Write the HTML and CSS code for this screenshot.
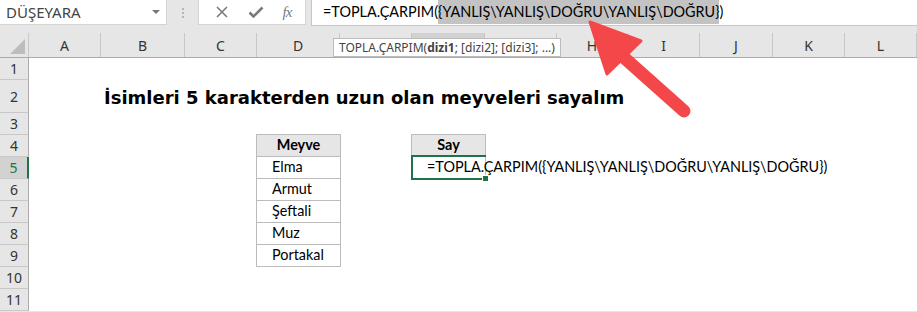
FILE: index.html
```html
<!DOCTYPE html>
<html lang="tr">
<head>
    <meta charset="UTF-8">
    <title>TOPLA.ÇARPIM</title>
    <link rel="stylesheet" href="styles.css">
</head>
<body>
  <div class="app">
    <div class="topbar">
      <div class="namebox">
        <span>DÜŞEYARA</span>
        <span class="caret"></span>
      </div>
      <div class="grip"><i></i><i></i><i></i></div>
      <div class="fxbox">
        <svg width="14" height="14" viewBox="0 0 14 14"><path d="M2 2 L12 12 M12 2 L2 12" stroke="#7a7a7a" stroke-width="1.6" fill="none"/></svg>
        <svg width="16" height="14" viewBox="0 0 16 14"><path d="M1.5 7.5 L5.5 11.5 L14.5 2.5" stroke="#7a7a7a" stroke-width="2.6" fill="none"/></svg>
        <span class="fx">fx</span>
      </div>
      <div class="formula">=TOPLA.ÇARPIM(<span class="hl">{YANLIŞ\YANLIŞ\DOĞRU\YANLIŞ\DOĞRU}</span>)</div>
    </div>

    <div class="colheads">
      <div class="corner"></div>
      <div class="ch w72">A</div>
      <div class="ch w84">B</div>
      <div class="ch w72">C</div>
      <div class="ch w83">D</div>
      <!-- E, F, G letters sit under the tooltip -->
      <div class="ch w72"></div>
      <div class="ch w73 active"></div>
      <div class="ch w72"></div>
      <div class="ch w71">H</div>
      <div class="ch w72">I</div>
      <div class="ch w73">J</div>
      <div class="ch w72">K</div>
      <div class="ch w72">L</div>
    </div>

    <div class="main">
      <div class="rowheads">
        <div class="rh">1</div>
        <div class="rh tall">2</div>
        <div class="rh">3</div>
        <div class="rh">4</div>
        <div class="rh active">5</div>
        <div class="rh">6</div>
        <div class="rh">7</div>
        <div class="rh">8</div>
        <div class="rh">9</div>
        <div class="rh">10</div>
        <div class="rh">11</div>
      </div>

      <div class="cells">
        <div class="title">İsimleri 5 karakterden uzun olan meyveleri sayalım</div>

        <div class="list fruits">
          <div class="item head">Meyve</div>
          <div class="item">Elma</div>
          <div class="item">Armut</div>
          <div class="item">Şeftali</div>
          <div class="item">Muz</div>
          <div class="item">Portakal</div>
        </div>

        <div class="list count">
          <div class="item head">Say</div>
          <div class="item"></div>
        </div>

        <div class="selected">=TOPLA.ÇARPIM({YANLIŞ\YANLIŞ\DOĞRU\YANLIŞ\DOĞRU})</div>
      </div>
    </div>

    <div class="tooltip">TOPLA.ÇARPIM(<b>dizi1</b>; [dizi2]; [dizi3]; ...)</div>

    <svg class="arrow" width="917" height="312" viewBox="0 0 917 312">
      <line x1="620" y1="54" x2="684" y2="111" stroke="#f4474a" stroke-width="13" stroke-linecap="round"/>
      <polygon points="590,22 641,41 607,74" fill="#f4474a" stroke="#f4474a" stroke-width="3" stroke-linejoin="round"/>
    </svg>
  </div>
</body>
</html>
```

FILE: styles.css
```css
body {
    margin: 0;
    background: #fff;
  }

  .app {
    position: relative;
    width: 917px;
    height: 312px;
    overflow: hidden;
    background: #e6e6e6;
  }

  /* formula bar */
  .topbar {
    display: flex;
    height: 26px;
    margin-bottom: 7px;
  }

  .namebox {
    width: 167px;
    height: 25px;
    box-sizing: border-box;
    background: #fff;
    border-right: 1px solid #d4d4d4;
    border-bottom: 1px solid #d4d4d4;
    display: flex;
    align-items: center;
    justify-content: space-between;
    padding: 0 6px 0 6px;
    font-family: "Noto Sans", sans-serif;
    font-size: 15px;
    color: #444;
  }

  .caret {
    width: 0;
    height: 0;
    border-left: 4px solid transparent;
    border-right: 4px solid transparent;
    border-top: 4px solid #777;
  }

  .grip {
    width: 31px;
    display: flex;
    flex-direction: column;
    align-items: center;
    justify-content: center;
    gap: 2px;
  }

  .grip i {
    width: 2px;
    height: 2px;
    background: #b4b4b4;
  }

  .fxbox {
    width: 108px;
    height: 25px;
    box-sizing: border-box;
    background: #fff;
    border: 1px solid #d4d4d4;
    border-top: none;
    display: flex;
    align-items: center;
    justify-content: space-around;
    padding: 0 4px 0 6px;
  }

  .fx {
    font-family: "Liberation Serif", serif;
    font-style: italic;
    font-size: 15px;
    color: #7a7a7a;
    letter-spacing: -1px;
  }

  .formula {
    margin-left: 5px;
    flex: 1;
    height: 26px;
    box-sizing: border-box;
    background: #fff;
    border: 1px solid #c6c6c6;
    border-top: none;
    border-right: none;
    padding: 3px 0 0 11px;
    font-family: Lato, sans-serif;
    font-size: 14.4px;
    color: #000;
    white-space: nowrap;
  }

  .hl {
    background: #c3c3c3;
    padding: 3px 0 4px;
  }

  /* column headers */
  .colheads {
    display: flex;
    height: 25px;
    box-sizing: border-box;
    border-bottom: 1px solid #ababab;
  }

  .corner {
    width: 29px;
    box-sizing: border-box;
    border-right: 1px solid #c8c8c8;
    position: relative;
  }

  .corner::after {
    content: "";
    position: absolute;
    right: 3px;
    bottom: 3px;
    border-left: 15px solid transparent;
    border-bottom: 15px solid #bdbdbd;
  }

  .ch {
    box-sizing: border-box;
    border-right: 1px solid #c8c8c8;
    display: flex;
    align-items: center;
    justify-content: center;
    font-family: "Noto Sans", sans-serif;
    font-size: 14px;
    color: #333;
  }

  .ch.active {
    background: #d2d2d2;
    border-bottom: 2px solid #217346;
  }

  .w71 { width: 71px; }
  .w72 { width: 72px; }
  .w73 { width: 73px; }
  .w83 { width: 83px; }
  .w84 { width: 84px; }

  /* rows */
  .main {
    display: flex;
  }

  .rowheads {
    width: 29px;
    flex: none;
  }

  .rh {
    height: 22px;
    box-sizing: border-box;
    border-bottom: 1px solid #c8c8c8;
    border-right: 1px solid #ababab;
    display: flex;
    align-items: center;
    justify-content: center;
    font-family: "Noto Sans", sans-serif;
    font-size: 14px;
    color: #333;
  }

  .rh.tall {
    height: 33px;
  }

  .rh.active {
    background: #d2d2d2;
    color: #217346;
    border-right: 2px solid #217346;
  }

  .cells {
    flex: 1;
    background: #fff;
    display: grid;
    grid-template-columns: 72px 84px 72px 83px 72px 73px 72px 71px 72px 73px 72px 72px;
    grid-template-rows: 22px 33px repeat(9, 22px);
    font-family: Lato, sans-serif;
    font-size: 14.4px;
    color: #000;
  }

  .title {
    grid-column: 2 / span 10;
    grid-row: 2;
    align-self: center;
    padding: 1px 0 0 3px;
    font-family: "DejaVu Sans", sans-serif;
    font-weight: bold;
    font-size: 18px;
    white-space: nowrap;
  }

  .list {
    grid-row: 4 / span 6;
    margin: -1px 0 0 -1px;
  }

  .fruits {
    grid-column: 4;
  }

  .count {
    grid-column: 6;
  }

  .item {
    height: 23px;
    box-sizing: border-box;
    border: 1px solid #bcbcbc;
    margin-top: -1px;
    padding: 1px 0 0 15px;
    width: calc(100% + 1px);
  }

  .item:first-child {
    margin-top: 0;
  }

  .item.head {
    background: #e7e6e6;
    font-weight: bold;
    text-align: center;
    padding-left: 0;
  }

  .selected {
    grid-column: 6;
    grid-row: 5;
    position: relative;
    margin: -2px -1px -1px -1px;
    border: 2px solid #217346;
    border-right: none;
    padding: 0 0 0 14px;
    white-space: nowrap;
    line-height: 20px;
  }

  .selected::after {
    content: "";
    position: absolute;
    right: -3px;
    bottom: -4px;
    width: 5px;
    height: 5px;
    background: #217346;
    border: 1px solid #fff;
  }

  .tooltip {
    position: absolute;
    left: 333px;
    top: 38px;
    height: 19px;
    box-sizing: border-box;
    padding: 0 5px;
    background: #fff;
    border: 1px solid #bcbcbc;
    font-family: "Noto Sans", sans-serif;
    font-size: 12px;
    line-height: 17px;
    color: #444;
    white-space: nowrap;
  }

  .arrow {
    position: absolute;
    left: 0;
    top: 0;
  }
```
